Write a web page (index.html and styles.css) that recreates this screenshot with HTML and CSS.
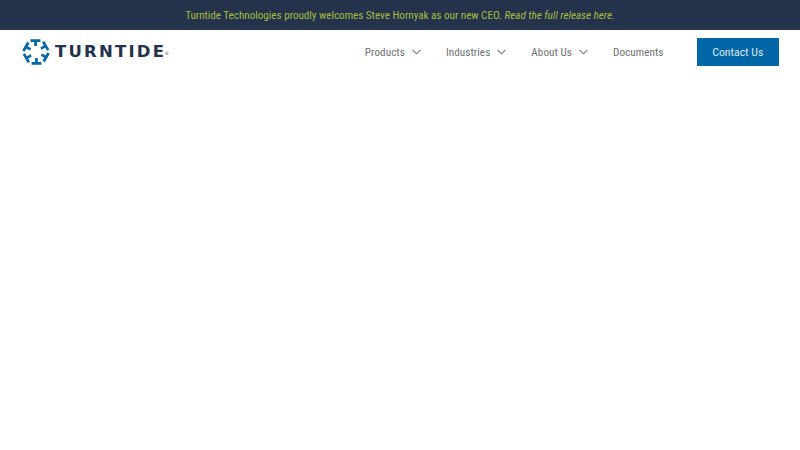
FILE: index.html
```html
<!DOCTYPE html>
<html lang="en">
<head>
<meta charset="utf-8">
<title>Turntide</title>
<link rel="stylesheet" href="styles.css">
</head>
<body>
<div class="banner"><p class="banner-text">Turntide Technologies proudly welcomes Steve Hornyak as our new CEO. <em>Read the full release here.</em></p></div>
<header class="header">
  <a class="logo" href="#">
    <svg class="logo-mark" width="30" height="28" viewBox="-15 -14 30 28" aria-hidden="true">
      <defs>
        <g id="seg"><path d="M-5.4 -11.4H4.4M-.5 -11.4V-6" fill="none" stroke="#0066a6" stroke-width="2.7"/></g>
      </defs>
      <use href="#seg"/>
      <use href="#seg" transform="rotate(60)"/>
      <use href="#seg" transform="rotate(120)"/>
      <use href="#seg" transform="rotate(180)"/>
      <use href="#seg" transform="rotate(240)"/>
      <use href="#seg" transform="rotate(300)"/>
    </svg>
    <span class="logo-word">TURNTIDE</span><span class="logo-reg">®</span>
  </a>
  <nav class="nav">
    <a class="nav-item" href="#">Products<svg class="chev" width="9" height="6" viewBox="0 0 9 6"><path d="M.5.8 4.5 4.8 8.5.8" fill="none" stroke="#77797c" stroke-width="1.1"/></svg></a>
    <a class="nav-item" href="#">Industries<svg class="chev" width="9" height="6" viewBox="0 0 9 6"><path d="M.5.8 4.5 4.8 8.5.8" fill="none" stroke="#77797c" stroke-width="1.1"/></svg></a>
    <a class="nav-item" href="#">About Us<svg class="chev" width="9" height="6" viewBox="0 0 9 6"><path d="M.5.8 4.5 4.8 8.5.8" fill="none" stroke="#77797c" stroke-width="1.1"/></svg></a>
    <a class="nav-item" href="#">Documents</a>
    <a class="cta" href="#">Contact Us</a>
  </nav>
</header>
</body>
</html>
```
FILE: styles.css
```css
* { box-sizing: border-box; }
html, body { margin: 0; height: 100%; background: #fff; overflow: hidden; }
body { font-family: Roboto, "Liberation Sans", sans-serif; }
a { text-decoration: none; color: inherit; }
.banner {
  height: 30px;
  background: #25324b;
  display: flex;
  align-items: center;
  justify-content: center;
}
.banner-text {
  margin: 0;
  font-size: 11.2px;
  font-stretch: 78%;
  letter-spacing: -0.04px;
  color: #a3bd3f;
}
.header {
  height: 44px;
  display: flex;
  align-items: center;
  justify-content: space-between;
  padding: 0 21px 0 21px;
}
.logo { display: flex; align-items: center; color: #25324b; }
.logo-mark { flex: none; margin-right: 4px; }
.logo-word {
  font-family: "DejaVu Sans", sans-serif;
  font-weight: 700;
  font-size: 16.5px;
  letter-spacing: 2.2px;
  line-height: 1;
}
.logo-reg { font-size: 4px; align-self: flex-start; margin: 13px 0 0 -1px; }
.nav { display: flex; align-items: center; }
.nav-item {
  display: flex;
  align-items: center;
  font-size: 11.2px;
  font-stretch: 78%;
  letter-spacing: 0.05px;
  color: #6f7174;
  margin-right: 25px;
}
.nav-item:nth-child(4) { margin-right: 33px; }
.chev { margin-left: 7px; }
.cta {
  width: 82.5px;
  height: 28px;
  background: #0066a6;
  color: #dbe9f3;
  font-size: 11.8px;
  font-stretch: 80%;
  display: flex;
  align-items: center;
  justify-content: center;
}
```
